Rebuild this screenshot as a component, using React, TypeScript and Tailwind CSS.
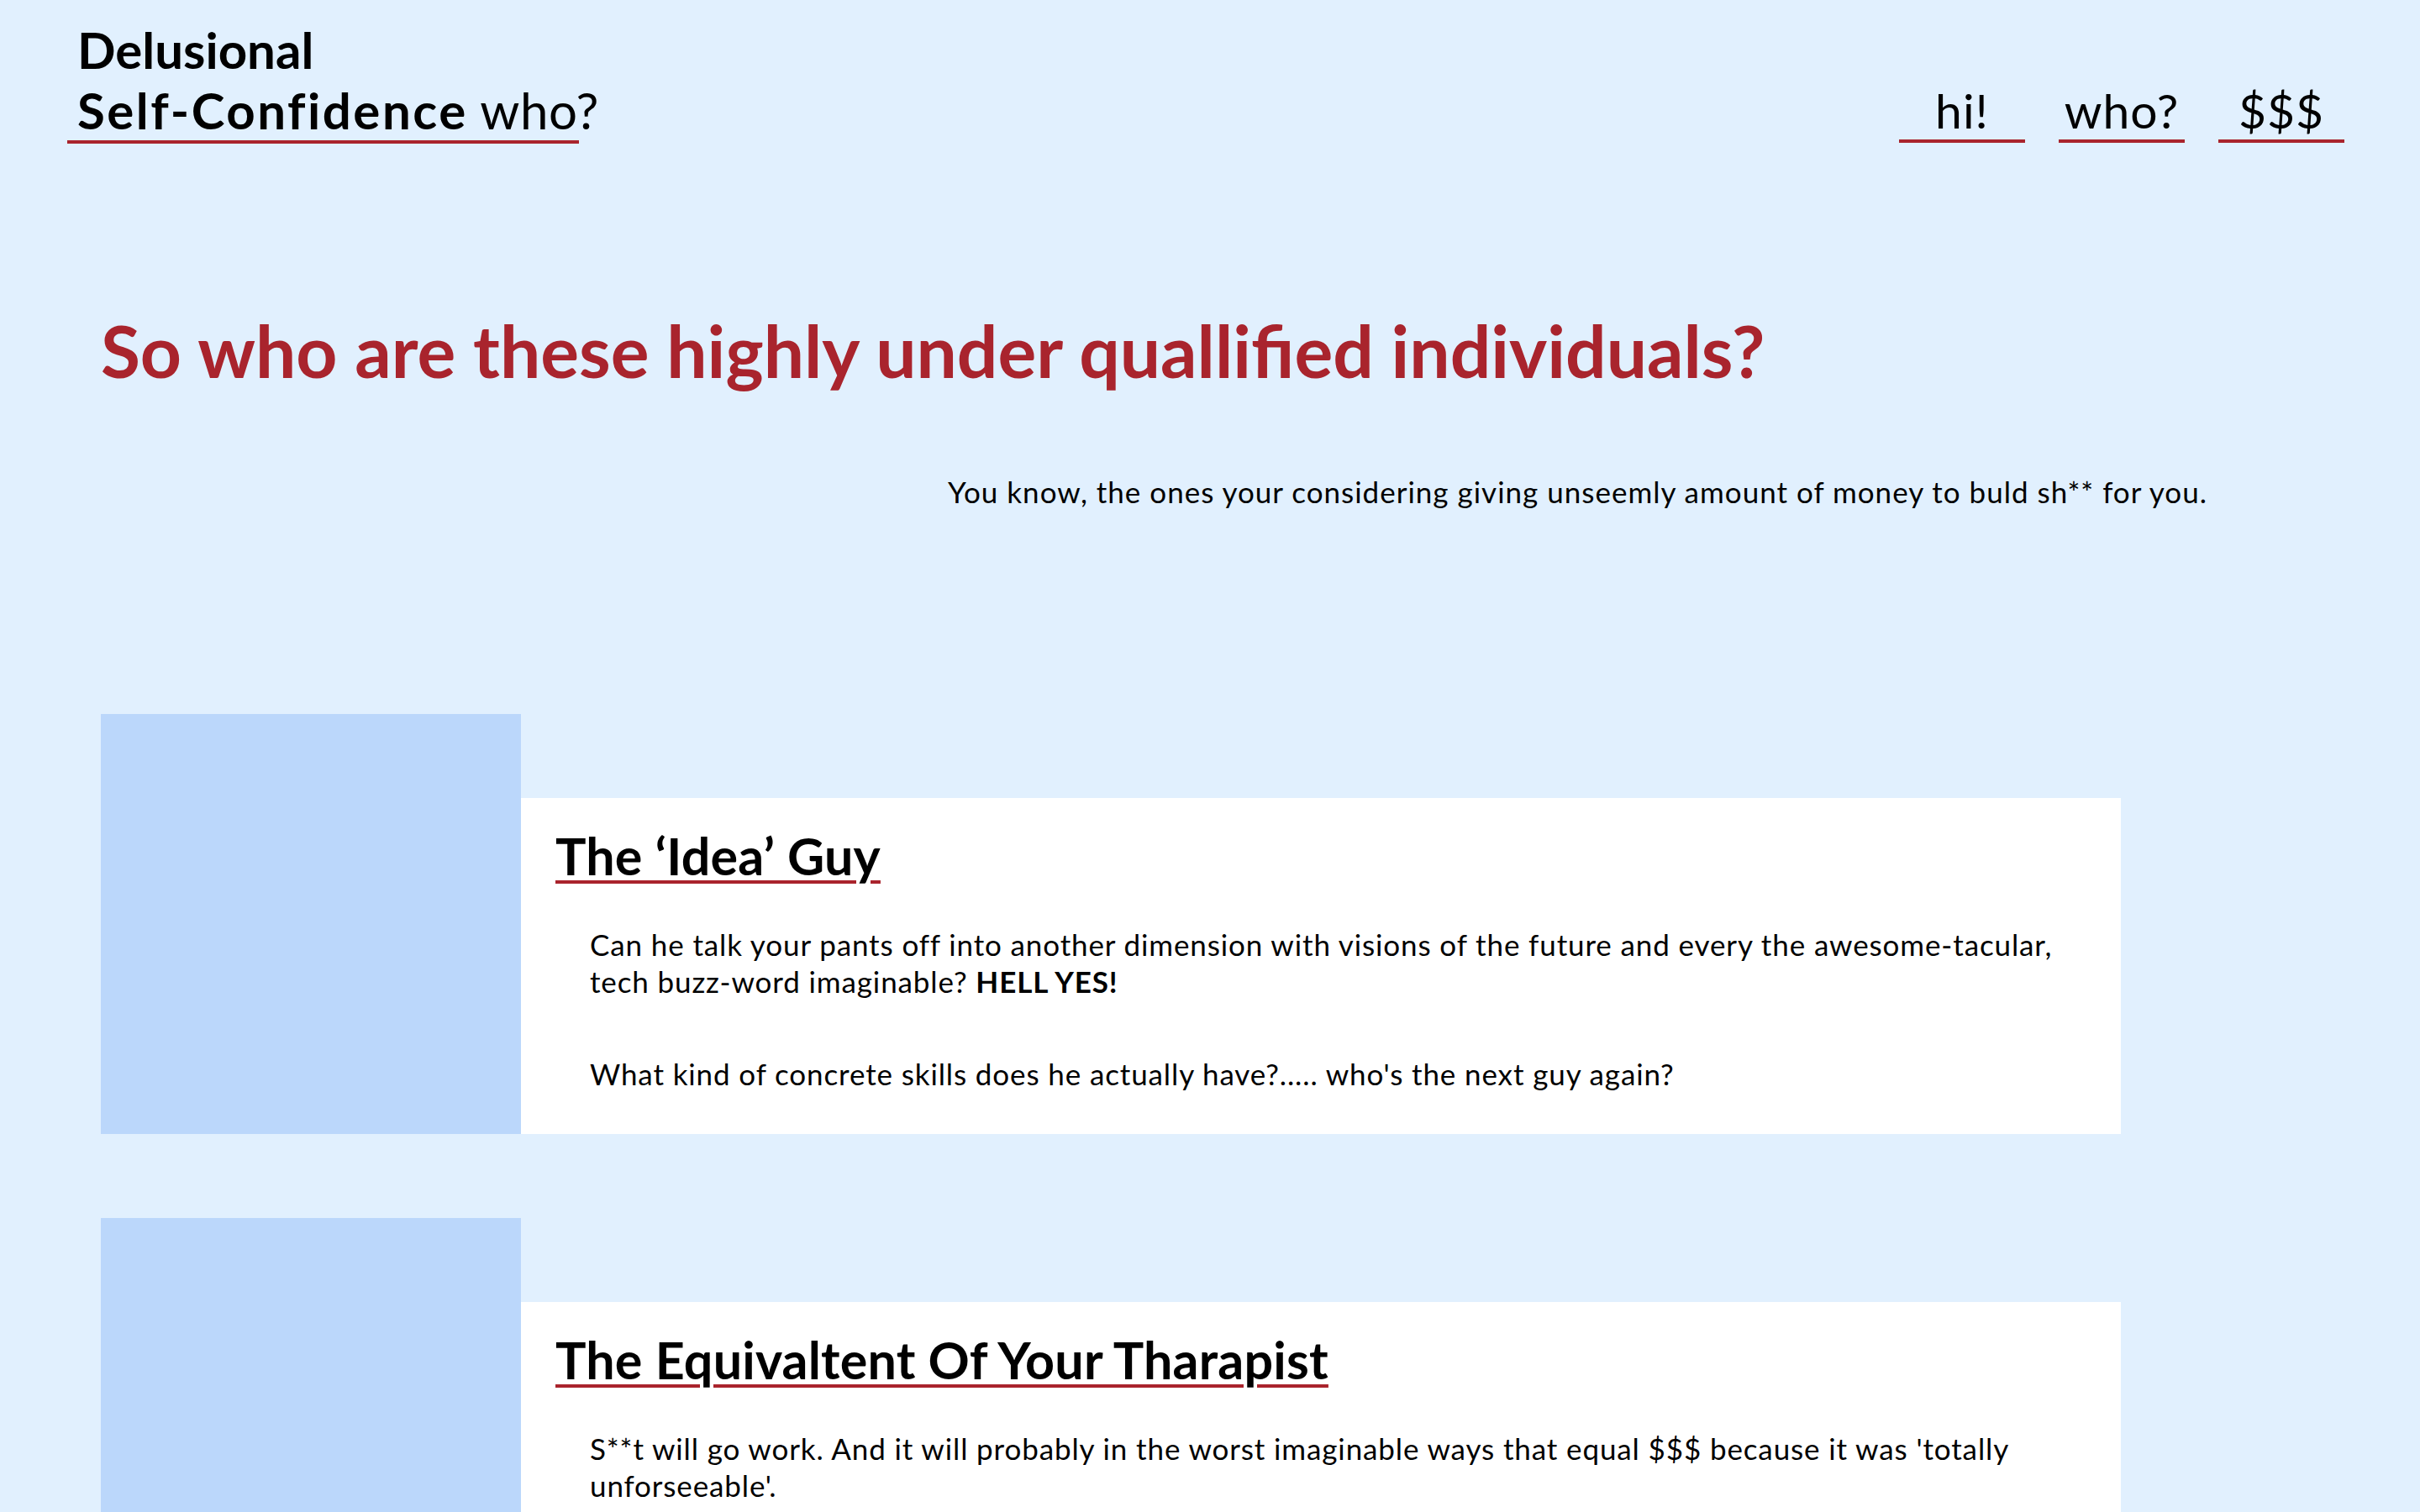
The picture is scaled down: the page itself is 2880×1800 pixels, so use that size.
import React from "react";

const RED = "#a9242d";

function NavItem({ label }: { label: string }) {
  return (
    <a className="block w-[150px] text-center text-[57px] leading-[64px] pb-[3px] border-b-4 border-[#a9242d] text-black tracking-[1px]">
      {label}
    </a>
  );
}

function Card({
  title,
  children,
}: {
  title: string;
  children: React.ReactNode;
}) {
  return (
    <div className="flex items-end">
      <div className="w-[500px] h-[500px] shrink-0 bg-[#bbd7fb]" />
      <div className="w-[1904px] min-h-[400px] shrink-0 bg-white pt-[33px] pl-[41px] pr-[41px] pb-[20px]">
        <h2 className="text-[61px] leading-[72px] font-bold text-black tracking-[0.2px] underline decoration-[#a9242d] decoration-4 underline-offset-[6px]">
          {title}
        </h2>
        <div className="pl-[41px] mt-[47px] text-[35px] leading-[44px] tracking-[0.88px] text-black">
          {children}
        </div>
      </div>
    </div>
  );
}

export default function App() {
  return (
    <div
      className="min-h-screen bg-[#e1f0fe] text-black pb-[200px]"
      style={{ fontFamily: "Lato, 'Noto Sans', sans-serif" }}
    >
      <header className="flex justify-between items-end pl-[80px] pr-[90px]">
        <div className="flex flex-col">
          <div className="pl-[12px] pt-[23px] text-[60px] leading-[72px] font-bold">
            Delusional
            <br />
            <span className="tracking-[2.5px] [font-variant-ligatures:none]">Self-Confidence</span>{" "}
            <span className="font-normal tracking-[0.5px]">who?</span>
          </div>
          <div className="w-[609px] h-[4px] bg-[#a9242d]" />
        </div>
        <nav className="flex gap-[40px] mb-[1px]">
          <NavItem label="hi!" />
          <NavItem label="who?" />
          <NavItem label="$$$" />
        </nav>
      </header>

      <h1
        className="mt-[195px] pl-[120px] text-[85.7px] leading-[102px] font-bold"
        style={{ color: RED }}
      >
        So who are these highly under quallified individuals?
      </h1>

      <p className="mt-[97px] pl-[1128px] text-[35px] leading-[41px] tracking-[1px]">
        You know, the ones your considering giving unseemly amount of money to buld sh** for you.
      </p>

      <div className="mt-[244px] pl-[120px] flex flex-col gap-[100px]">
        <Card title="The ‘Idea’ Guy">
          <p>
            Can he talk your pants off into another dimension with visions of the future and every the awesome-tacular, tech buzz-word imaginable? <b>HELL YES!</b>
          </p>
          <p className="mt-[66px]">
            What kind of concrete skills does he actually have?..... who's the next guy again?
          </p>
        </Card>
        <Card title="The Equivaltent Of Your Tharapist">
          <p>
            S**t will go work. And it will probably in the worst imaginable ways that equal $$$ because it was 'totally unforseeable'.
          </p>
        </Card>
      </div>
    </div>
  );
}
